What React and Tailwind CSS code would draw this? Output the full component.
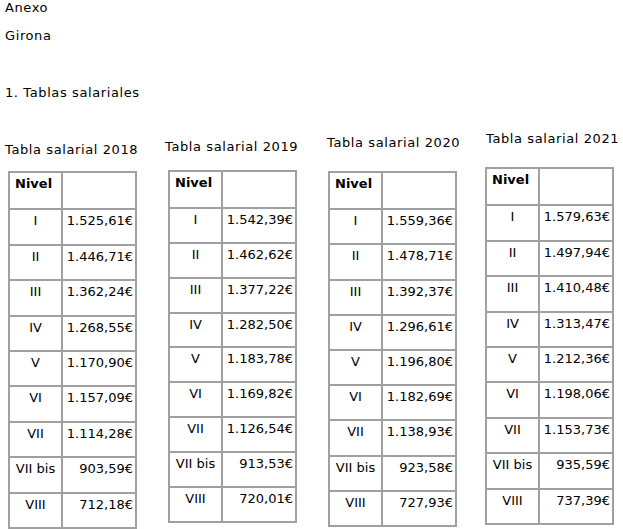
const tables = [
  {
    year: "2018",
    left: "ml-[5px]",
    titleTop: "mt-[41px]",
    gap: "mt-[13px]",
    tableLeft: "ml-[3px]",
    row: "h-[35.4px]",
    values: ["1.525,61€", "1.446,71€", "1.362,24€", "1.268,55€", "1.170,90€", "1.157,09€", "1.114,28€", "903,59€", "712,18€"],
  },
  {
    year: "2019",
    left: "ml-[0px]",
    titleTop: "mt-[38px]",
    gap: "mt-[15px]",
    tableLeft: "ml-[3px]",
    row: "h-[34.9px]",
    values: ["1.542,39€", "1.462,62€", "1.377,22€", "1.282,50€", "1.183,78€", "1.169,82€", "1.126,54€", "913,53€", "720,01€"],
  },
  {
    year: "2020",
    left: "ml-[2px]",
    titleTop: "mt-[34px]",
    gap: "mt-[20px]",
    tableLeft: "ml-[1px]",
    row: "h-[35.2px]",
    values: ["1.559,36€", "1.478,71€", "1.392,37€", "1.296,61€", "1.196,80€", "1.182,69€", "1.138,93€", "923,58€", "727,93€"],
  },
  {
    year: "2021",
    left: "-ml-[1px]",
    titleTop: "mt-[30px]",
    gap: "mt-[20px]",
    tableLeft: "-ml-[1px]",
    row: "h-[35.4px]",
    values: ["1.579,63€", "1.497,94€", "1.410,48€", "1.313,47€", "1.212,36€", "1.198,06€", "1.153,73€", "935,59€", "737,39€"],
  },
];

const niveles = ["I", "II", "III", "IV", "V", "VI", "VII", "VII bis", "VIII"];

function Tabla({ t }) {
  return (
    <div className={`w-[160px] shrink-0 ${t.left}`}>
      <p className={`${t.titleTop} tracking-[0.6px] whitespace-nowrap`}>Tabla salarial {t.year}</p>
      <div className={`${t.gap} ${t.tableLeft} w-[129px] border-2 border-[#a0a0a0]`}>
        <div className={`flex ${t.row}`}>
          <div className="w-[53px] border-r-2 border-[#a0a0a0] px-[5px] pt-[3px] font-bold">Nivel</div>
          <div className="flex-1"></div>
        </div>
        {niveles.map((n, i) => (
          <div key={n} className={`flex border-t-2 border-[#a0a0a0] ${t.row}`}>
            <div className="w-[53px] border-r-2 border-[#a0a0a0] pt-[3px] text-center">{n}</div>
            <div className="flex-1 pr-[2px] pt-[3px] text-right">{t.values[i]}</div>
          </div>
        ))}
      </div>
    </div>
  );
}

export default function App() {
  return (
    <div className="min-h-[529px] bg-white text-[13px] leading-[16px] text-black" style={{ fontFamily: '"DejaVu Sans", Verdana, sans-serif' }}>
      <div className="pl-[5px] tracking-[0.6px]">
        <p>Anexo</p>
        <p className="mt-[12px]">Girona</p>
        <p className="mt-[41px]">1. Tablas salariales</p>
      </div>
      <div className="flex">
        {tables.map((t) => (
          <Tabla key={t.year} t={t} />
        ))}
      </div>
    </div>
  );
}
